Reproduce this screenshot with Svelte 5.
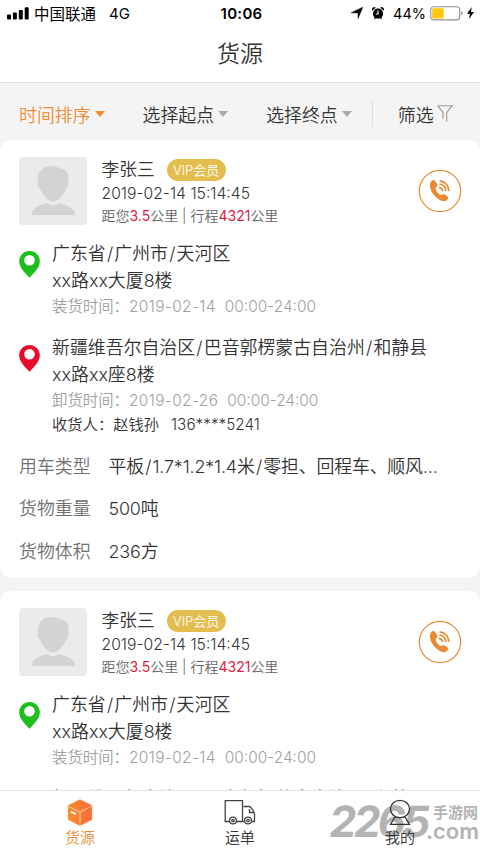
<script lang="ts">
  const filters = [
    { label: '时间排序', active: true },
    { label: '选择起点', active: false },
    { label: '选择终点', active: false },
  ]

  const order = {
    name: '李张三',
    time: '2019-02-14 15:14:45',
    distance: '3.5',
    trip: '4321',
    from: {
      area: '广东省/广州市/天河区',
      street: 'xx路xx大厦8楼',
      label: '装货时间：',
      date: '2019-02-14',
      hours: '00:00-24:00',
    },
    to: {
      area: '新疆维吾尔自治区/巴音郭楞蒙古自治州/和静县',
      street: 'xx路xx座8楼',
      label: '卸货时间：',
      date: '2019-02-26',
      hours: '00:00-24:00',
      receiver: '赵钱孙',
      phone: '136****5241',
    },
    specs: [
      ['用车类型', '平板/1.7*1.2*1.4米/零担、回程车、顺风...'],
      ['货物重量', '500吨'],
      ['货物体积', '236方'],
    ],
  }
  const orders = [order, order]
</script>

{#snippet pin(color: string)}
  <svg class="pin" width="21" height="27" viewBox="0 0 21 27">
    <path fill={color} fill-rule="evenodd" d="M10.5 0C4.7 0 .2 4.5.2 10.2c0 6 4.6 10.4 10.3 16.6 5.7-6.2 10.3-10.6 10.3-16.6C20.8 4.5 16.3 0 10.5 0zm0 4a5.3 5.3 0 1 1 0 10.6 5.3 5.3 0 0 1 0-10.6z" />
  </svg>
{/snippet}

{#snippet slashed(text: string)}
  {#each text.split('/') as part, i}{#if i > 0}<span class="slash">/</span>{/if}{part}{/each}
{/snippet}

<div class="app">
  <div class="status">
    <svg width="22" height="13" viewBox="0 0 22 13">
      <rect x="0" y="7.5" width="4" height="5" rx="1" />
      <rect x="5.9" y="5.5" width="4" height="7" rx="1" />
      <rect x="11.8" y="3" width="4" height="9.5" rx="1" />
      <rect x="17.7" y="0.3" width="4" height="12.2" rx="1" />
    </svg>
    <span class="carrier">中国联通</span>
    <span class="net">4G</span>
    <b class="clock">10:06</b>
    <div class="power">
      <svg width="12" height="12" viewBox="0 0 12 12"><path d="M11.8.2 7 11.6V6L.2 5.8z" stroke="#000" stroke-width=".5" /></svg>
      <svg class="alarm" width="12" height="13" viewBox="0 0 12 13">
        <circle cx="6" cy="6.7" r="5.1" />
        <path d="M.3 3.7A2.3 2.3 0 0 1 3.7.7zM11.7 3.7A2.3 2.3 0 0 0 8.3.7zM1.5 12.5l1.5-2 1 1zM10.5 12.5l-1.5-2-1 1z" />
        <path d="M6 3.5V7H3.8" fill="none" stroke="#fff" stroke-width="1.1" />
      </svg>
      <span>44%</span>
      <svg class="battery" width="34" height="15" viewBox="0 0 34 15">
        <rect x=".7" y=".7" width="29" height="13.2" rx="3" fill="#fff" stroke="#919191" stroke-width="1.1" />
        <rect x="2.2" y="2.2" width="11.5" height="10.2" rx="1.2" fill="#ffc90a" />
        <path d="M31.2 5v4.6c2-.8 2-3.8 0-4.6z" fill="#919191" />
      </svg>
      <svg width="7" height="12" viewBox="0 0 7 12"><path d="M4.8 0 0 6.7h2.9L2 12l5-7H3.9z" /></svg>
    </div>
  </div>

  <h1>货源</h1>

  <div class="filters">
    {#each filters as f}
      <div class="filter" class:active={f.active}>{f.label}<i class="caret"></i></div>
    {/each}
    <div class="sift">
      筛选
      <svg width="16" height="18" viewBox="0 0 16 18">
        <path d="M.8.8h14.4L9.7 7.5v9.3M.8.8 6 7.5V14" fill="none" stroke="#999" stroke-width="1.1" />
      </svg>
    </div>
  </div>

  <div class="list">
    {#each orders as o}
      <div class="card">
        <div class="head">
          <svg class="avatar" width="68" height="68" viewBox="0 0 68 68">
            <rect width="68" height="68" rx="4" fill="#ebebeb" />
            <path fill="#d3d3d3" d="M18.8 24C18 15 24 9 32 9c4 0 7 1 9.5 2.5 5 0 8 4 8 9 0 2-.4 3.5-.5 5 .8 2 .2 4.500-1.800 6.500C44.500 38 39.500 44.500 34 44.500S24 38 20.800 31.500c-2.500-2-3-5-2-7.500z" />
            <path fill="#d3d3d3" d="M12.700 56.500c.5-5 7-8.500 16-10.500 3 3.200 8 3.200 11 0 9 2 15.500 5.500 16.300 10.500 0 1.200-.8 1.500-1.800 1.500H14.500c-1 0-1.800-.3-1.800-1.500z" />
          </svg>
          <div class="info">
            <div class="who"><span class="name">{o.name}</span><span class="vip">VIP会员</span></div>
            <div class="time">{o.time}</div>
            <div class="range">距您<em>{o.distance}</em>公里 | 行程<em>{o.trip}</em>公里</div>
          </div>
          <svg class="call" width="44" height="44" viewBox="0 0 44 44">
            <circle cx="22" cy="22" r="20.7" fill="none" stroke="#e98a32" stroke-width="1.2" />
            <path fill="#e98a32" d="M13.2 12.2c1.500-1.300 3-1.600 4-.3l2 3.300c.7 1.300.2 2.300-1.500 3.600-.6 2 2.900 6.800 5.100 7.500 1.900-1.200 3-1.500 4-.7l2.700 2c1.200 1 .8 2.300-.8 3.700-2.500 2-6.500.8-10.300-2.800-5.500-5-8.300-12.500-5.200-16.300z" />
            <g fill="none" stroke="#e98a32" stroke-width="1.7">
              <path d="M21 18.3c2 .3 3.400 1.800 3.600 3.900" />
              <path d="M21.300 15c3.900.4 6.400 3.200 6.500 7.100" />
              <path d="M21.600 11.800c5.500.5 9.200 4.500 9.200 10.300" />
            </g>
          </svg>
        </div>

        <div class="stop">
          {@render pin('#1cbf1c')}
          <div>
            <div class="addr">{@render slashed(o.from.area)}</div>
            <div class="addr">{o.from.street}</div>
            <div class="when">{o.from.label}<span class="date">{o.from.date}</span><span>{o.from.hours}</span></div>
          </div>
        </div>

        <div class="stop">
          {@render pin('#ea0a2a')}
          <div>
            <div class="addr">{@render slashed(o.to.area)}</div>
            <div class="addr">{o.to.street}</div>
            <div class="when">{o.to.label}<span class="date">{o.to.date}</span><span>{o.to.hours}</span></div>
            <div class="receiver">收货人：{o.to.receiver}<span>{o.to.phone}</span></div>
          </div>
        </div>

        <dl>
          {#each o.specs as [key, value]}
            <div class="spec"><dt>{key}</dt><dd>{@render slashed(value)}</dd></div>
          {/each}
        </dl>
      </div>
    {/each}
  </div>

  <div class="tabs">
    <div class="watermark">
      <span class="digits">2265</span>
      <div class="site"><span class="cn">手游网</span><span class="com">.com</span></div>
    </div>
    <div class="tab active">
      <svg width="26" height="27" viewBox="0 0 26 27">
        <defs>
          <linearGradient id="box" x1="0" y1="0" x2="1" y2="0">
            <stop offset="0" stop-color="#f88d2b" />
            <stop offset="1" stop-color="#fa6b3d" />
          </linearGradient>
        </defs>
        <path fill="url(#box)" d="M13 .8 24.7 6.5v14L13 26.500 1.300 20.500v-14z" stroke="url(#box)" stroke-width=".8" stroke-linejoin="round" />
        <path d="M1.300 7.200 13 13.200l11.700-6M13 13.200V26" fill="none" stroke="#ffd0ac" stroke-width="1" />
        <path d="m4 12.800 5 2.300" stroke="#fff" stroke-width="2" />
      </svg>
      货源
    </div>
    <div class="tab">
      <svg width="32" height="27" viewBox="0 0 32 27" fill="none" stroke="#444" stroke-width="1.3">
        <path d="M5.800 22.500H1.200V1.700h17.300v20.800H12M19 22.500h1.500M19.500 7.500h5.700c2 .5 5 5 5.300 7.500v7.500H28" />
        <path d="M30 13.500h-4.500V10" />
        <circle cx="9" cy="21.5" r="3.4" />
        <circle cx="9" cy="21.5" r="1.2" />
        <circle cx="24" cy="21.5" r="3.4" />
        <circle cx="24" cy="21.5" r="1.2" />
      </svg>
      运单
    </div>
    <div class="tab">
      <svg width="22" height="27" viewBox="0 0 22 27" fill="none" stroke="#333" stroke-width="1.3">
        <ellipse cx="11" cy="10" rx="9.5" ry="8.7" />
        <path d="M6 18 1.500 25.300h19L16 18" />
      </svg>
      我的
    </div>
  </div>
</div>

<style>
  :global(body) { margin: 0; }
  .app {
    display: flex;
    flex-direction: column;
    width: 480px;
    height: 854px;
    overflow: hidden;
    background: #f4f4f4;
    color: #333;
    font-family: Inter, "Noto Sans CJK SC", sans-serif;
    font-weight: 350;
  }
  svg { display: block; flex: none; }

  .status {
    position: relative;
    display: grid;
    grid-template-columns: 22px auto auto 1fr auto;
    align-items: center;
    height: 26px;
    padding: 0 6px 0 7px;
    background: #fff;
    color: #000;
    font-size: 15px;
    font-weight: 400;
  }
  .carrier { margin-left: 5px; font-size: 15.5px; }
  .net { margin-left: 13px; }
  .clock {
    position: absolute;
    left: 3px;
    right: 0;
    text-align: center;
    font-size: 15px;
    font-weight: 600;
    letter-spacing: 0.3px;
  }
  .power { display: flex; align-items: center; grid-column: 5; }
  .power span { font-size: 14.5px; }
  .alarm { margin: 0 9px; }
  .battery { margin: 0 3px 0 4px; }

  h1 {
    height: 56px;
    margin: 0;
    background: #fff;
    border-bottom: 1px solid #e4e4e4;
    font-size: 23px;
    font-weight: 350;
    line-height: 56px;
    text-align: center;
  }

  .filters {
    display: flex;
    align-items: center;
    height: 57px;
    flex: none;
    padding: 4px 26px 0 19px;
    box-sizing: border-box;
    font-size: 17.9px;
  }
  .filter { display: flex; align-items: center; margin-right: 38px; }
  .filter.active { color: #f08c32; }
  .caret {
    margin-left: 4px;
    border: 5px solid transparent;
    border-top: 6px solid #aaa;
    border-bottom: 0;
  }
  .active .caret { border-top-color: #f08c32; }
  .sift {
    display: flex;
    align-items: center;
    gap: 3px;
    height: 26px;
    margin-left: -18px;
    padding-left: 25px;
    border-left: 1px solid #ddd;
  }

  .list { flex: 1; min-height: 0; overflow: hidden; }
  .card {
    height: 438px;
    margin-bottom: 13px;
    padding: 17px 19px 0;
    box-sizing: border-box;
    border-radius: 12px;
    background: #fff;
  }
  .head { display: flex; height: 83px; }
  .info { flex: 1; padding-left: 14.5px; }
  .who { display: flex; align-items: center; height: 25px; }
  .name { margin-top: -3px; font-size: 17.7px; }
  .vip {
    margin-left: 12px;
    width: 59px;
    border-radius: 11px;
    background: #e4bd50;
    color: #fff;
    font-size: 13px;
    line-height: 22px;
    text-align: center;
  }
  .time { font-size: 15.7px; line-height: 23px; }
  .range { font-size: 14px; line-height: 22px; color: #666; }
  .range em { color: #e0203f; font-style: normal; font-weight: 400; }
  .call { margin-top: 11.5px; margin-right: -1px; }

  .stop { display: flex; gap: 12px; margin-bottom: 15.4px; }
  .pin { margin-top: 11px; }
  .addr { font-size: 17.9px; line-height: 27px; }
  .slash { margin: 0 1.2px; }
  .when { font-size: 15.4px; line-height: 25px; color: #a0a0a0; }
  .when .date { margin-right: 9px; letter-spacing: 0.4px; }
  .receiver { font-size: 15.3px; line-height: 24px; }
  .receiver span { margin-left: 12px; }

  dl { margin: -6.8px 0 0; }
  .spec { display: flex; font-size: 17.9px; line-height: 42.3px; white-space: nowrap; }
  dt { width: 89.5px; flex: none; color: #707070; }
  dd { margin: 0; letter-spacing: -0.15px; }

  .tabs {
    position: relative;
    display: flex;
    height: 63px;
    flex: none;
    border-top: 1px solid #e2e2e2;
    background: #fff;
  }
  .tab {
    position: relative;
    display: flex;
    flex: 1;
    flex-direction: column;
    align-items: center;
    padding-top: 8px;
    font-size: 15px;
    line-height: 24px;
  }
  .tab.active { color: #f08c32; }
  .watermark {
    position: absolute;
    left: 330px;
    top: 12px;
    display: flex;
    color: #b3b3b3;
    font-weight: 600;
  }
  .digits {
    width: 96px;
    font-size: 43px;
    font-weight: 700;
    letter-spacing: -3px;
    line-height: 37px;
    transform: skewX(-8deg);
  }
  .site { display: flex; flex-direction: column; }
  .cn { padding-left: 7px; font-size: 15px; line-height: 20px; }
  .com { font-size: 22px; line-height: 16px; }
</style>
